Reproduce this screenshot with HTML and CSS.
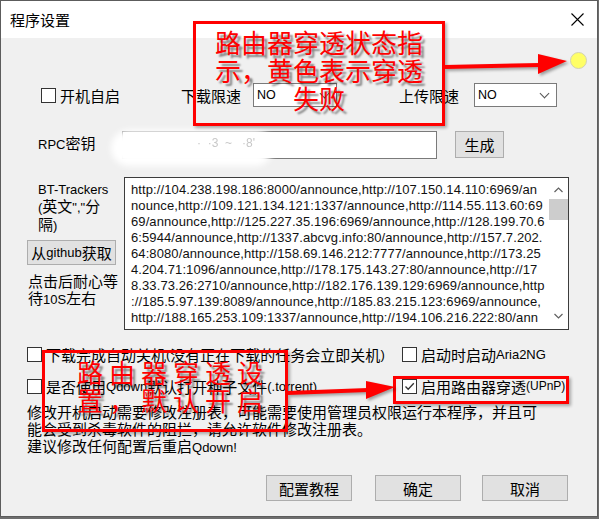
FILE: index.html
```html
<!DOCTYPE html>
<html lang="zh-CN">
<head>
  <meta charset="UTF-8" />
  <title>程序设置</title>
  <meta name="viewport" content="width=device-width, initial-scale=1.0" />
  <link rel="stylesheet" href="styles.css">
</head>
<body>
  <div class="window">
    <div class="titlebar">
      <span class="title">程序设置</span>
      <svg class="close" width="13" height="13" viewBox="0 0 13 13">
        <path d="M0.5 0.5 L12.5 12.5 M12.5 0.5 L0.5 12.5" stroke="#000" stroke-width="1.1" fill="none" />
      </svg>
    </div>

    <div class="content">
      <div class="status">
        <span class="dot"></span>
      </div>

      <div class="row row-speed">
        <label class="check check-boot"><span class="box"></span>开机自启</label>
        <span class="lbl lbl-down">下载限速</span>
        <div class="combo combo-down"><span class="en">NO</span><span class="chev"></span></div>
        <span class="lbl lbl-up">上传限速</span>
        <div class="combo combo-up"><span class="en">NO</span><span class="chev"></span></div>
      </div>

      <div class="row row-rpc">
        <span class="rpc-label"><span class="en">RPC</span>密钥</span>
        <div class="rpc-input"></div>
        <button class="btn btn-gen">生成</button>
      </div>

      <div class="trackers">
        <div class="side">
          <div class="side-label"><span class="en">BT-Trackers</span><br><span class="en">(</span>英文<span class="en">","</span>分<br>隔<span class="en">)</span></div>
          <button class="btn btn-github">从<span class="en">github</span>获取</button>
          <div class="side-hint">点击后耐心等<br>待<span class="en">10S</span>左右</div>
        </div>
        <div class="tracker-box">
          <div class="tracker-text">http://104.238.198.186:8000/announce,http://107.150.14.110:6969/an
nounce,http://109.121.134.121:1337/announce,http://114.55.113.60:69
69/announce,http://125.227.35.196:6969/announce,http://128.199.70.6
6:5944/announce,http://1337.abcvg.info:80/announce,http://157.7.202.
64:8080/announce,http://158.69.146.212:7777/announce,http://173.25
4.204.71:1096/announce,http://178.175.143.27:80/announce,http://17
8.33.73.26:2710/announce,http://182.176.139.129:6969/announce,http
://185.5.97.139:8089/announce,http://185.83.215.123:6969/announce,
http://188.165.253.109:1337/announce,http://194.106.216.222:80/ann</div>
          <div class="scrollbar">
            <svg class="arrow-up" width="9" height="6" viewBox="0 0 9 6"><path d="M0.5 5 L4.5 1 L8.5 5" stroke="#606060" stroke-width="1.2" fill="none" /></svg>
            <div class="thumb"></div>
            <svg class="arrow-down" width="9" height="6" viewBox="0 0 9 6"><path d="M0.5 1 L4.5 5 L8.5 1" stroke="#606060" stroke-width="1.2" fill="none" /></svg>
          </div>
        </div>
      </div>

      <div class="options">
        <div class="opt-row">
          <label class="check check-wide"><span class="box"></span>下载完成自动关机<span class="en">(</span>没有正在下载的任务会立即关机<span class="en">)</span></label>
          <label class="check"><span class="box"></span>启动时启动<span class="en">Aria2NG</span></label>
        </div>
        <div class="opt-row">
          <label class="check check-wide"><span class="box"></span>是否使用<span class="en">Qdown</span>默认打开种子文件<span class="en">(.torrent)</span></label>
          <label class="check"><span class="box checked"><svg width="13" height="13" viewBox="0 0 13 13"><path d="M2.5 6.5 L5.2 9.3 L10.8 3.2" stroke="#333" stroke-width="1.3" fill="none" /></svg></span>启用路由器穿透<span class="en en-sm">(UPnP)</span></label>
        </div>
      </div>

      <div class="notes">
        <p>修改开机启动需要修改注册表，可能需要使用管理员权限运行本程序，并且可<br>能会受到杀毒软件的阻拦，请允许软件修改注册表。</p>
        <p class="notes-last">建议修改任何配置后重启<span class="en">Qdown!</span></p>
      </div>

      <div class="actions">
        <button class="btn btn-act btn-guide">配置教程</button>
        <button class="btn btn-act btn-ok">确定</button>
        <button class="btn btn-act btn-cancel">取消</button>
      </div>
    </div>

    <!-- masked key -->
    <div class="mask"></div>
    <div class="mask-chars">·&nbsp;&nbsp;·3&nbsp;&nbsp;~&nbsp;&nbsp;&nbsp;·8'</div>

    <!-- annotations -->
    <div class="note-box note-status">路由器穿透状态指<br>示，黄色表示穿透<br>失败</div>
    <div class="note-box note-upnp">路由器穿透设<br>置，默认开启</div>
    <div class="note-box note-check"></div>
    <svg class="arrows" width="598" height="517" viewBox="0 0 598 517">
      <path d="M445 67 L540 65" stroke="#f00" stroke-width="4" />
      <polygon points="538,54 567,61 538,74" fill="#f00" />
      <path d="M288 393 L368 390" stroke="#f00" stroke-width="4" />
      <polygon points="366,381 395,387 366,399" fill="#f00" />
    </svg>
  </div>
</body>
</html>
```

FILE: styles.css
```css
* {
  box-sizing: border-box;
  margin: 0;
  padding: 0;
}

html, body {
  width: 599px;
  height: 519px;
  overflow: hidden;
  background: #6e6e6e;
}

.window {
  position: relative;
  width: 598px;
  height: 517px;
  border: 1px solid #5c5c5c;
  background: #f0f0f0;
  font-family: "Noto Sans CJK SC", sans-serif;
  font-size: 15px;
  line-height: 17px;
  color: #000;
}

.en {
  font-family: "Liberation Sans", sans-serif;
  font-size: 13px;
}

.en-sm {
  font-size: 12px;
}

/* title bar */
.titlebar {
  height: 37px;
  background: #fff;
  display: flex;
  align-items: center;
  justify-content: space-between;
  padding: 0 13px 0 9px;
}

.title {
  font-size: 15px;
}

.close {
  display: block;
}

/* status dot */
.status {
  height: 17px;
  margin-top: 14px;
  display: flex;
  justify-content: flex-end;
  padding-right: 10px;
}

.dot {
  width: 17px;
  height: 17px;
  border-radius: 50%;
  background: #ffff66;
  border: 1px solid #d2d2b4;
}

.row {
  display: flex;
  align-items: center;
}

/* checkbox */
.check {
  display: flex;
  align-items: center;
  white-space: nowrap;
}

.box {
  width: 15px;
  height: 15px;
  border: 1px solid #333;
  background: #fff;
  margin-right: 4px;
  display: flex;
  align-items: center;
  justify-content: center;
  flex: none;
}

/* speed row */
.row-speed {
  height: 24px;
  margin-top: 14px;
}

.check-boot {
  margin-left: 40px;
}

.lbl-down {
  margin-left: 61px;
}

.lbl-up {
  margin-left: 62px;
}

.combo {
  height: 24px;
  border: 1px solid #7a7a7a;
  background: #fff;
  display: flex;
  align-items: center;
  justify-content: space-between;
  padding: 0 6px 0 3px;
}

.combo .en {
  font-size: 12.5px;
}

.combo-down {
  width: 84px;
  margin-left: 12px;
}

.combo-up {
  width: 83px;
  margin-left: 15px;
}

.chev {
  width: 7px;
  height: 7px;
  border-right: 1px solid #555;
  border-bottom: 1px solid #555;
  transform: rotate(45deg);
  margin-top: -4px;
  margin-right: 2px;
}

/* rpc row */
.row-rpc {
  height: 30px;
  margin-top: 23px;
}

.rpc-label {
  width: 84px;
  margin-left: 37px;
  margin-top: -3px;
}

.rpc-input {
  width: 315px;
  height: 28px;
  border: 1px solid #7a7a7a;
  background: #fff;
}

.btn {
  font-family: "Noto Sans CJK SC", sans-serif;
  font-size: 15px;
  line-height: 17px;
  color: #000;
  background: #e1e1e1;
  border: 1px solid #adadad;
  display: flex;
  align-items: center;
  justify-content: center;
}

.btn-gen {
  width: 49px;
  height: 27px;
  margin-left: 18px;
  margin-top: -2px;
}

/* trackers */
.trackers {
  display: flex;
  height: 153px;
  margin-top: 17px;
}

.side {
  width: 89px;
  margin-left: 26px;
}

.side-label {
  margin-top: 3px;
  padding-left: 11px;
  line-height: 16px;
}

.btn-github {
  width: 89px;
  height: 25px;
  margin-top: 6px;
  white-space: nowrap;
}

.side-hint {
  margin-top: 7px;
  padding-left: 1px;
  line-height: 17px;
  white-space: nowrap;
}

.tracker-box {
  width: 445px;
  height: 153px;
  margin-left: 8px;
  border: 1px solid #3c3c3c;
  background: #fff;
  display: flex;
}

.tracker-text {
  flex: 1;
  padding: 4px 0 0 6px;
  font-family: "Liberation Sans", sans-serif;
  font-size: 13px;
  letter-spacing: 0.1px;
  line-height: 16px;
  white-space: pre;
  overflow: hidden;
  color: #111;
}

.scrollbar {
  width: 20px;
  display: flex;
  flex-direction: column;
  align-items: center;
}

.arrow-up {
  margin-top: 9px;
}

.thumb {
  width: 19px;
  height: 21px;
  margin-top: 6px;
  background: #cdcdcd;
}

.arrow-down {
  margin-top: auto;
  margin-bottom: 10px;
}

/* options */
.options {
  margin-top: 17px;
}

.opt-row {
  display: flex;
  align-items: center;
  height: 15px;
}

.opt-row + .opt-row {
  margin-top: 17px;
}

.check-wide {
  width: 375px;
  margin-left: 26px;
}

/* notes */
.notes {
  margin-top: 9px;
  padding-left: 26px;
  line-height: 17px;
}

/* bottom buttons */
.actions {
  display: flex;
  margin-top: 19px;
}

.btn-act {
  width: 86px;
  height: 26px;
}

.btn-guide {
  margin-left: 265px;
}

.btn-ok {
  margin-left: 23px;
}

.btn-cancel {
  margin-left: 21px;
}

/* masked key */
.mask {
  position: absolute;
  left: 110px;
  top: 129px;
  width: 162px;
  height: 36px;
  background: #fff;
  border-radius: 18px;
  filter: blur(3px);
}

.mask-chars {
  position: absolute;
  left: 196px;
  top: 134px;
  font-family: "Liberation Sans", sans-serif;
  font-size: 12px;
  color: #c8c8c8;
  filter: blur(0.6px);
  white-space: nowrap;
}

/* annotations */
.note-box {
  position: absolute;
  border: 3px solid #f00;
  box-shadow: 2px 2px 3px rgba(0, 0, 0, 0.3);
  color: #f00;
  font-size: 26px;
  line-height: 28px;
  text-shadow: 3px 3px 2px rgba(0, 0, 0, 0.45);
  white-space: nowrap;
}

.note-status {
  left: 192px;
  top: 20px;
  width: 252px;
  height: 105px;
  padding-top: 4px;
  text-align: center;
}

.note-upnp {
  left: 41px;
  top: 349px;
  width: 246px;
  height: 82px;
  padding: 5px 0 0 32px;
  letter-spacing: 6px;
}

.note-check {
  left: 392px;
  top: 375px;
  width: 176px;
  height: 28px;
}

.arrows {
  position: absolute;
  left: -1px;
  top: -1px;
  pointer-events: none;
  filter: drop-shadow(2px 2px 1.5px rgba(0, 0, 0, 0.35));
}
```
